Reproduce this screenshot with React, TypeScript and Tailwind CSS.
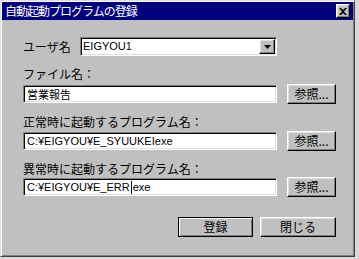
const jp = "font-['Noto_Sans_CJK_JP','Liberation_Sans',sans-serif]";
const lat = "font-['Liberation_Sans','Noto_Sans_CJK_JP',sans-serif]";

const sunken =
  "border border-t-[#808080] border-l-[#808080] border-r-white border-b-white shadow-[inset_1px_1px_0_#000,inset_-1px_-1px_0_#dfdfdf]";
const raised =
  "border border-t-white border-l-white border-r-black border-b-black shadow-[inset_-1px_-1px_0_#808080,inset_1px_1px_0_#dfdfdf]";

function Field({ children }: { children: React.ReactNode }) {
  return (
    <div className={`w-[254px] h-[18px] bg-white ${sunken} flex items-center pl-[3px] text-[11px] text-black ${lat}`}>
      {children}
    </div>
  );
}

function Browse() {
  return (
    <button className={`w-[49px] h-[20px] bg-[#c0c0c0] ${raised} flex items-center justify-center text-[12px] text-black ${jp}`}>
      参照...
    </button>
  );
}

function Label({ text, mt }: { text: string; mt: string }) {
  return <div className={`${mt} h-[14px] leading-[14px] text-[12px] text-black ${jp}`}>{text}</div>;
}

export default function App() {
  return (
    <div className="w-[359px] h-[259px] bg-[#d8d8d8]">
      <div className="w-[355px] h-[257px] bg-[#c0c0c0] border border-t-[#dfdfdf] border-l-[#dfdfdf] border-r-[#404040] border-b-[#404040] shadow-[inset_1px_1px_0_#fff,inset_-1px_-1px_0_#808080] p-px flex flex-col">
        {/* title bar */}
        <div className="h-[18px] bg-[#000080] flex items-center justify-between pl-[3px] pr-[3px]">
          <span className={`text-[12px] tracking-[-1px] text-white leading-none ${jp}`}>自動起動プログラムの登録</span>
          <div className={`w-[14px] h-[14px] bg-[#c0c0c0] ${raised} flex items-center justify-center`}>
            <svg width="8" height="7" viewBox="0 0 8 7">
              <path d="M0 0h2l2 2 2-2h2L5 3.5 8 7H6L4 5 2 7H0l3-3.5z" fill="#000" />
            </svg>
          </div>
        </div>

        <div className="flex flex-col pl-[21px]">
          {/* user row */}
          <div className="mt-[17px] h-[19px] flex items-center">
            <span className={`w-[57px] text-[12px] text-black ${jp}`}>ユーザ名</span>
            <div className={`w-[197px] h-[19px] bg-white ${sunken} flex items-center justify-between pl-[2px] pr-px`}>
              <span className={`text-[11px] text-black ${lat}`}>EIGYOU1</span>
              <div className={`w-[16px] h-[15px] bg-[#c0c0c0] ${raised} flex items-center justify-center`}>
                <svg width="7" height="4" viewBox="0 0 7 4">
                  <path d="M0 0h7L3.5 4z" fill="#000" />
                </svg>
              </div>
            </div>
          </div>

          <Label text="ファイル名：" mt="mt-[11px]" />
          <div className="mt-[3px] flex items-center gap-[10px]">
            <Field>
              <span className={jp}>営業報告</span>
            </Field>
            <Browse />
          </div>

          <Label text="正常時に起動するプログラム名：" mt="mt-[11px]" />
          <div className="mt-[2px] flex items-center gap-[10px]">
            <Field>C:¥EIGYOU¥E_SYUUKEIexe</Field>
            <Browse />
          </div>

          <Label text="異常時に起動するプログラム名：" mt="mt-[11px]" />
          <div className="mt-px flex items-center gap-[10px]">
            <Field>
              C:¥EIGYOU¥E_ERR
              <span className="inline-block w-px h-[13px] bg-black mx-px" />
              exe
            </Field>
            <Browse />
          </div>

          <div className="mt-[20px] flex gap-[7px] pl-[155px]">
            <button className={`w-[75px] h-[20px] bg-[#c0c0c0] border border-black shadow-[inset_1px_1px_0_#fff,inset_-1px_-1px_0_#808080] flex items-center justify-center text-[12px] text-black ${jp}`}>
              登録
            </button>
            <button className={`w-[76px] h-[20px] bg-[#c0c0c0] ${raised} flex items-center justify-center text-[12px] text-black ${jp}`}>
              閉じる
            </button>
          </div>
        </div>
      </div>
    </div>
  );
}
